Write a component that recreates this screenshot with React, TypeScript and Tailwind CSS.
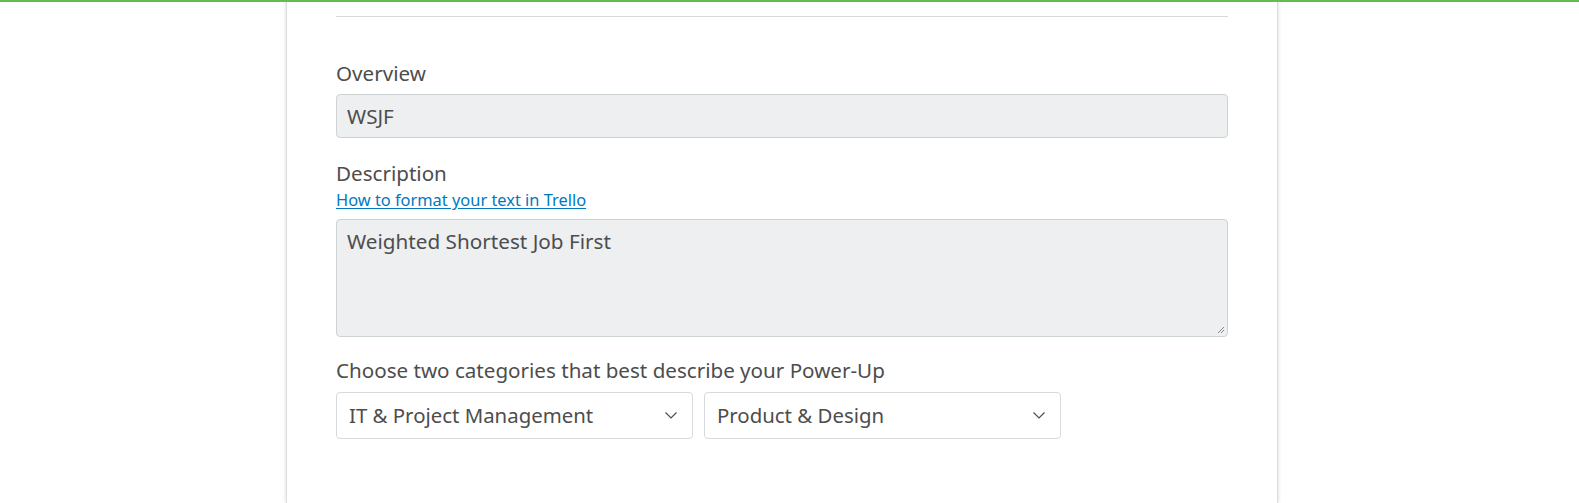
import React from 'react';

const Chevron: React.FC = () => (
    <svg width="14" height="9" viewBox="0 0 14 9" fill="none" className="shrink-0">
        <path d="M1.5 1.5l5.5 5.5 5.5-5.5" stroke="#4d4d4d" strokeWidth="1.2" />
    </svg>
);

const SelectBox: React.FC<{ value: string }> = ({ value }) => (
    <div className="flex items-center justify-between w-[357px] h-[47px] pl-3 pr-[14px] bg-white border border-[#d6dadc] rounded-[4px]">
        <span className="text-[20.4px] text-[#4d4d4d]">{value}</span>
        <Chevron />
    </div>
);

export default function App() {
    return (
        <div className="w-[1579px] h-[503px] bg-white overflow-hidden relative" style={{ fontFamily: '"Noto Sans", "Open Sans", sans-serif' }}>
            <div className="absolute top-0 left-0 right-0 h-[2px] bg-[#61bd4f] z-10"></div>
            <div className="ml-[286px] w-[992px] h-[503px] bg-white border-x border-[#dcdcdc] shadow-[0_0_4px_rgba(0,0,0,0.15)] px-[49px]">
                <div className="pt-[16px]">
                    <div className="h-px bg-[#d6dadc]"></div>
                </div>
                <div className="mt-[43px] text-[20.6px] leading-[26px] text-[#4d4d4d]">Overview</div>
                <div className="mt-[8px] h-[44px] bg-[#edeff0] border border-[#cdd2d4] rounded-[4px] px-[10px] flex items-center text-[20.6px] text-[#4d4d4d]">
                    WSJF
                </div>
                <div className="mt-[22px] text-[20.6px] leading-[26px] text-[#4d4d4d]">Description</div>
                <a href="#" className="block mt-[4px] text-[16.4px] leading-[20px] text-[#0079bf] underline underline-offset-2">How to format your text in Trello</a>
                <div className="relative mt-[9px] h-[118px] bg-[#edeff0] border border-[#cdd2d4] rounded-[4px] px-[10px] pt-[6px] text-[20.7px] text-[#4d4d4d]">
                    Weighted Shortest Job First
                    <svg className="absolute right-[2px] bottom-[2px]" width="9" height="9" viewBox="0 0 9 9">
                        <path d="M8 2L2 8M8 5L5 8" stroke="#888" strokeWidth="1" />
                    </svg>
                </div>
                <div className="mt-[20px] text-[20.6px] leading-[26px] text-[#4d4d4d]">Choose two categories that best describe your Power-Up</div>
                <div className="mt-[9px] flex gap-[11px]">
                    <SelectBox value="IT & Project Management" />
                    <SelectBox value="Product & Design" />
                </div>
            </div>
        </div>
    );
}
